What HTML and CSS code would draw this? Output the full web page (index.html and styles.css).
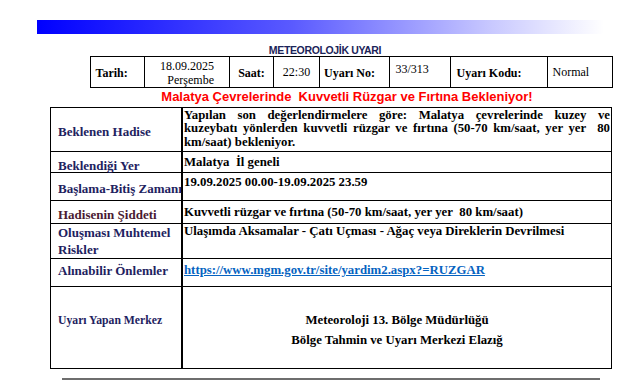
FILE: index.html
```html
<!DOCTYPE html>
<html lang="tr">
<head>
<meta charset="utf-8">
<title>Meteorolojik Uyarı</title>
<link rel="stylesheet" href="styles.css">
</head>
<body>
<div class="page">
  <div class="band"></div>
  <div class="title">METEOROLOJİK UYARI</div>
  <div class="info">
    <div class="ic lbl pl-tarih">Tarih:</div>
    <div class="ic date"><span>18.09.2025</span><span>Perşembe</span></div>
    <div class="ic lbl center">Saat:</div>
    <div class="ic center">22:30</div>
    <div class="ic lbl pl-no">Uyarı No:</div>
    <div class="ic top pl-num">33/313</div>
    <div class="ic lbl pl-kod">Uyarı Kodu:</div>
    <div class="ic pl-normal">Normal</div>
  </div>
  <div class="headline">Malatya Çevrelerinde&nbsp; Kuvvetli Rüzgar ve Fırtına Bekleniyor!</div>
  <div class="warn">
    <div class="cell lab r1l">Beklenen Hadise</div>
    <div class="cell v r1v">
      <span class="jl">Yapılan son değerlendirmelere göre: Malatya çevrelerinde kuzey ve</span>
      <span class="jl">kuzeybatı yönlerden kuvvetli rüzgar ve fırtına (50-70 km/saat, yer yer &nbsp;80</span>
      <span>km/saat) bekleniyor.</span>
    </div>
    <div class="cell lab r2l">Beklendiği Yer</div>
    <div class="cell v r2v">Malatya&nbsp; İl geneli</div>
    <div class="cell lab r3l">Başlama-Bitiş Zamanı</div>
    <div class="cell v r3v">19.09.2025 00.00-19.09.2025 23.59</div>
    <div class="cell lab maroon r4l">Hadisenin Şiddeti</div>
    <div class="cell v r4v">Kuvvetli rüzgar ve fırtına (50-70 km/saat, yer yer&nbsp; 80 km/saat)</div>
    <div class="cell lab r5l">Oluşması Muhtemel<br>Riskler</div>
    <div class="cell v r5v">Ulaşımda Aksamalar - Çatı Uçması - Ağaç veya Direklerin Devrilmesi</div>
    <div class="cell lab r6">Alınabilir Önlemler</div>
    <div class="cell v r6"><a class="link" href="#">https://www.mgm.gov.tr/site/yardim2.aspx?=RUZGAR</a></div>
    <div class="cell lab small r7l">Uyarı Yapan Merkez</div>
    <div class="cell v r7v"><span>Meteoroloji 13. Bölge Müdürlüğü</span><span>Bölge Tahmin ve Uyarı Merkezi Elazığ</span></div>
  </div>
  <div class="rule"></div>
</div>
</body>
</html>
```

FILE: styles.css
```css
html, body {
  margin: 0;
  padding: 0;
  background: #ffffff;
}
body {
  width: 641px;
  height: 380px;
  overflow: hidden;
  font-family: "Liberation Serif", "Times New Roman", serif;
  color: #000;
}
.page {
  display: flex;
  flex-direction: column;
  align-items: flex-start;
}
.band {
  margin-top: 20px;
  margin-left: 37px;
  width: 567px;
  height: 14px;
  background: linear-gradient(to right, #0000ff 0%, #5a5aff 45%, #c8c8ff 80%, #ffffff 100%);
}
.title {
  margin-top: 10px;
  margin-left: 225px;
  width: 200px;
  text-align: center;
  font-family: "Liberation Sans", Arial, sans-serif;
  font-weight: bold;
  font-size: 10.5px;
  letter-spacing: -0.35px;
  line-height: 12px;
  color: #1b2459;
  white-space: nowrap;
}
.info {
  margin-left: 90px;
  display: grid;
  grid-template-columns: 53px 84px 43px 45px 69px 60px 96px 64px;
  grid-template-rows: 30px;
  column-gap: 1px;
  padding: 1px;
  background: #000;
  width: fit-content;
}
.ic {
  background: #fff;
  display: flex;
  flex-direction: column;
  justify-content: center;
  font-size: 12px;
  line-height: 14px;
  white-space: nowrap;
}
.ic.lbl {
  font-weight: bold;
  padding-top: 1px;
}
.ic.center {
  align-items: center;
}
.ic.top {
  justify-content: flex-start;
  padding-top: 5px;
}
.pl-tarih { padding-left: 4.5px; }
.pl-no { padding-left: 4px; }
.pl-num { padding-left: 5.5px; }
.pl-kod { padding-left: 5.5px; }
.pl-normal { padding-left: 4.5px; }
.ic.date {
  justify-content: flex-start;
  align-items: flex-end;
  padding-top: 3.4px;
  padding-right: 15px;
  line-height: 13.3px;
}
.headline {
  margin-top: 1px;
  margin-left: 147px;
  width: 400px;
  text-align: center;
  font-family: "Liberation Sans", Arial, sans-serif;
  font-weight: bold;
  font-size: 13px;
  line-height: 16px;
  color: #ff0000;
  white-space: nowrap;
}
.warn {
  margin-top: 2px;
  margin-left: 50px;
  display: grid;
  grid-template-columns: 130px 428px;
  grid-template-rows: 43px 20px 27px 22px 34px 27px 81px;
  column-gap: 2px;
  row-gap: 1px;
  padding: 1px;
  background: #000;
  width: fit-content;
}
.cell {
  background: #fff;
  display: flex;
  flex-direction: column;
  justify-content: flex-start;
  font-weight: bold;
  line-height: 15px;
  overflow: visible;
}
.lab {
  font-size: 13px;
  color: #1e2260;
  padding-left: 7px;
  white-space: nowrap;
}
.lab.maroon {
  color: #4a1a32;
}
.lab.small {
  font-size: 11.7px;
}
.v {
  font-size: 12.8px;
  padding-left: 1px;
  padding-right: 1px;
  white-space: nowrap;
}
.jl {
  display: block;
  text-align: justify;
  text-align-last: justify;
}
.r1l { justify-content: center; padding-top: 3px; }
.r1v { padding-top: 1px; line-height: 13.3px; white-space: normal; }
.r2l { justify-content: flex-end; line-height: 12px; }
.r2v { padding-top: 3px; }
.r3l { justify-content: center; padding-top: 3.5px; }
.r3v { padding-top: 2.2px; }
.r4l { justify-content: flex-end; line-height: 12px; padding-bottom: 2px; }
.r4v { padding-top: 4px; }
.r5l { line-height: 17px; padding-top: 0; }
.r5v { padding-top: 0; }
.r6 { padding-top: 4px; }
.r7l { padding-top: 26px; }
.r7v { padding-top: 23px; line-height: 20px; align-items: center; }
.link {
  color: #0563c1;
  text-decoration: underline;
}
.rule {
  margin-top: 9px;
  margin-left: 62px;
  width: 538px;
  height: 3px;
  background: #6e6e6e;
}
```
